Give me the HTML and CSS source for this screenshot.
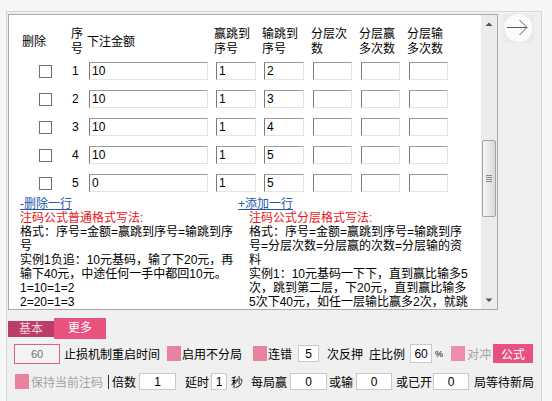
FILE: index.html
```html
<!DOCTYPE html>
<html lang="zh-CN">
<head>
<meta charset="utf-8">
<title>注码设置</title>
<link rel="stylesheet" href="styles.css">
</head>
<body>
<div class="panel">
  <div class="top">
    <div class="scrollbox">
      <div class="content">
        <div class="grid">
          <div class="h mid del">删除</div>
          <div class="h">序<br>号</div>
          <div class="h mid">下注金额</div>
          <div class="h">赢跳到<br>序号</div>
          <div class="h">输跳到<br>序号</div>
          <div class="h">分层次<br>数</div>
          <div class="h">分层赢<br>多次数</div>
          <div class="h">分层输<br>多次数</div>

          <div class="c cbcell"><input class="cb" type="checkbox"></div>
          <div class="c num">1</div>
          <div class="c"><input class="ti w1" type="text" value="10"></div>
          <div class="c"><input class="ti w2" type="text" value="1"></div>
          <div class="c"><input class="ti w2" type="text" value="2"></div>
          <div class="c"><input class="ti w3" type="text" value=""></div>
          <div class="c"><input class="ti w3" type="text" value=""></div>
          <div class="c"><input class="ti w3" type="text" value=""></div>

          <div class="c cbcell"><input class="cb" type="checkbox"></div>
          <div class="c num">2</div>
          <div class="c"><input class="ti w1" type="text" value="10"></div>
          <div class="c"><input class="ti w2" type="text" value="1"></div>
          <div class="c"><input class="ti w2" type="text" value="3"></div>
          <div class="c"><input class="ti w3" type="text" value=""></div>
          <div class="c"><input class="ti w3" type="text" value=""></div>
          <div class="c"><input class="ti w3" type="text" value=""></div>

          <div class="c cbcell"><input class="cb" type="checkbox"></div>
          <div class="c num">3</div>
          <div class="c"><input class="ti w1" type="text" value="10"></div>
          <div class="c"><input class="ti w2" type="text" value="1"></div>
          <div class="c"><input class="ti w2" type="text" value="4"></div>
          <div class="c"><input class="ti w3" type="text" value=""></div>
          <div class="c"><input class="ti w3" type="text" value=""></div>
          <div class="c"><input class="ti w3" type="text" value=""></div>

          <div class="c cbcell"><input class="cb" type="checkbox"></div>
          <div class="c num">4</div>
          <div class="c"><input class="ti w1" type="text" value="10"></div>
          <div class="c"><input class="ti w2" type="text" value="1"></div>
          <div class="c"><input class="ti w2" type="text" value="5"></div>
          <div class="c"><input class="ti w3" type="text" value=""></div>
          <div class="c"><input class="ti w3" type="text" value=""></div>
          <div class="c"><input class="ti w3" type="text" value=""></div>

          <div class="c cbcell"><input class="cb" type="checkbox"></div>
          <div class="c num">5</div>
          <div class="c"><input class="ti w1" type="text" value="0"></div>
          <div class="c"><input class="ti w2" type="text" value="1"></div>
          <div class="c"><input class="ti w2" type="text" value="5"></div>
          <div class="c"><input class="ti w3" type="text" value=""></div>
          <div class="c"><input class="ti w3" type="text" value=""></div>
          <div class="c"><input class="ti w3" type="text" value=""></div>
        </div>

        <div class="notes">
          <div class="col left">
            <span class="link">-删除一行</span>
            <div class="red">注码公式普通格式写法:</div>
            <div>格式：序号=金额=赢跳到序号=输跳到序<br>号</div>
            <div>实例1负追：10元基码，输了下20元，再<br>输下40元，中途任何一手中都回10元。</div>
            <div>1=10=1=2</div>
            <div>2=20=1=3</div>
          </div>
          <div class="col right">
            <span class="link">+添加一行</span>
            <div class="txt">
              <div class="red">注码公式分层格式写法:</div>
              <div>格式：序号=金额=赢跳到序号=输跳到序<br>号=分层次数=分层赢的次数=分层输的资<br>料</div>
              <div>实例1：10元基码一下下，直到赢比输多5<br>次，跳到第二层，下20元，直到赢比输多<br>5次下40元，如任一层输比赢多2次，就跳</div>
            </div>
          </div>
        </div>
      </div>
      <div class="vscroll">
        <div class="sb-btn"><svg width="16" height="17" viewBox="0 0 16 17"><path d="M4.5 11 L8 7.5 L11.5 11 Z" fill="#505050"/></svg></div>
        <div class="track">
          <div class="thumb"><span class="grip"></span></div>
        </div>
        <div class="sb-btn"><svg width="16" height="17" viewBox="0 0 16 17"><path d="M4.5 6.5 L8 10 L11.5 6.5 Z" fill="#505050"/></svg></div>
      </div>
    </div>
    <div class="next">
      <svg width="31" height="29" viewBox="0 0 31 29">
        <circle cx="15.5" cy="14" r="14" fill="#fbfbfb"/>
        <path d="M4 13.5 H24 M16.5 6 L24 13.5 L16.5 21" fill="none" stroke="#5a5a5a" stroke-width="1"/>
      </svg>
    </div>
  </div>

  <div class="tabs">
    <div class="tab t1">基本</div>
    <div class="tab t2">更多</div>
  </div>

  <div class="row r1">
    <input class="in60" type="text" value="60">
    <span class="m4">止损机制重启时间</span>
    <span class="pk m7"></span>
    <span class="m1">启用不分局</span>
    <span class="pk m11"></span>
    <span class="m1">连错</span>
    <input class="gi m6 wi21" type="text" value="5">
    <span class="m8">次反押</span>
    <span class="m6">庄比例</span>
    <input class="gi m5 wi22 tall" type="text" value="60">
    <span class="pct m3">%</span>
    <span class="pk light m9"></span>
    <span class="gray m2">对冲</span>
    <button class="btn m2" type="button">公式</button>
  </div>

  <div class="row r2">
    <span class="pk m8"></span>
    <span class="gray m2">保持当前注码</span>
    <span class="bar m5"></span>
    <span class="m3b">倍数</span>
    <input class="gi m3 wi37" type="text" value="1">
    <span class="m9">延时</span>
    <input class="gi m2 wi16" type="text" value="1">
    <span class="m4">秒</span>
    <span class="m8">每局赢</span>
    <input class="gi m3 wi37" type="text" value="0">
    <span class="m2">或输</span>
    <input class="gi m3 wi36" type="text" value="0">
    <span class="m4">或已开</span>
    <input class="gi m1 wi36" type="text" value="0">
    <span class="m5">局等待新局</span>
  </div>
</div>
</body>
</html>
```

FILE: styles.css
```css
* { box-sizing: border-box; }
html, body { margin: 0; padding: 0; }
body {
  width: 552px;
  height: 401px;
  overflow: hidden;
  background: #f6f6f6;
  padding-top: 11px;
  font-family: "Liberation Sans", "Noto Sans CJK SC", sans-serif;
  font-size: 12px;
  color: #000;
}
.panel {
  margin-left: 6px;
  width: 536px;
  height: 390px;
  background: #f0f0f0;
  border: 1px solid #d6d6d6;
  border-bottom: none;
  padding-top: 2px;
}
.top { display: flex; align-items: flex-start; }
.scrollbox {
  margin-left: 1px;
  width: 490px;
  height: 296px;
  border: 1px solid #a9a9a9;
  background: #fff;
  display: flex;
}
.content {
  flex: 1;
  overflow: hidden;
  padding: 12px 0 0 11px;
  line-height: 14px;
}
.grid {
  display: grid;
  grid-template-columns: 50px 17px 127px 48px 49px 48px 48px 48px;
  grid-template-rows: 30px repeat(5, 28px);
}
.h { line-height: 15px; align-self: start; }
.h.mid { align-self: center; }
.h.del { padding-left: 2px; }
.h:nth-child(2) { padding-left: 1px; }
.c { align-self: center; display: flex; align-items: center; }
.cbcell { padding-left: 19px; }
.num { padding-left: 2px; }
.cb {
  appearance: none;
  -webkit-appearance: none;
  margin: 0;
  width: 13px;
  height: 13px;
  border: 1px solid #707070;
  background: #fff;
}
.ti {
  appearance: none;
  margin: 0 0 0 2px;
  height: 18px;
  padding: 0 2px;
  font: inherit;
  font-size: 12px;
  color: #000;
  background: #fff;
  border-style: solid;
  border-width: 1px;
  border-color: #9c9c9c #e3e3e3 #e3e3e3 #7a7a7a;
  outline: none;
}
.w1 { width: 119px; }
.w2 { width: 40px; }
.w3 { width: 39px; }

.notes { display: flex; }
.col.left { width: 218px; }
.col { white-space: nowrap; }
.right .txt { padding-left: 11px; }
.link { color: #2458a8; text-decoration: underline; display: inline-block; }
.red { color: #e8141c; }

.vscroll {
  width: 16px;
  background: #ececec;
  display: flex;
  flex-direction: column;
}
.sb-btn { height: 17px; display: flex; }
.track { flex: 1; }
.thumb {
  margin: 108px 1px 0 1px;
  height: 77px;
  border: 1px solid #a3a3a3;
  border-radius: 2px;
  background: linear-gradient(to right, #f5f5f5, #d9d9d9);
  display: flex;
  align-items: center;
  justify-content: center;
}
.grip {
  width: 6px;
  height: 7px;
  background: repeating-linear-gradient(to bottom, #8a8a8a 0 1px, transparent 1px 2px);
}
.next {
  margin-left: 5px;
  width: 31px;
  height: 29px;
  background: #e9e9e9;
  display: flex;
}

.tabs {
  margin-top: 8px;
  height: 21px;
  display: flex;
  align-items: center;
  padding-left: 1px;
}
.tab { text-align: center; }
.t1 {
  width: 46px;
  height: 16px;
  line-height: 16px;
  background: #bb3d68;
  color: #f6d3df;
}
.t2 {
  width: 52px;
  height: 21px;
  line-height: 21px;
  background: #e8527f;
  color: #fff;
}

.row {
  display: flex;
  align-items: center;
  height: 21px;
  white-space: nowrap;
}
.r1 { margin-top: 4px; }
.r2 { margin-top: 7px; }

.in60 {
  appearance: none;
  margin: 0 0 0 7px;
  width: 46px;
  height: 20px;
  border: 1px solid #d9628c;
  background: #f3f3f3;
  color: #6e6e6e;
  font: inherit;
  font-size: 11px;
  text-align: center;
  padding: 0;
  outline: none;
}
.gi {
  appearance: none;
  height: 17px;
  border: 1px solid #c9c9c9;
  background: #fff;
  color: #000;
  font: inherit;
  font-size: 12px;
  text-align: center;
  padding: 0;
  outline: none;
}
.tall { height: 19px; }
.wi21 { width: 21px; }
.wi22 { width: 22px; }
.wi37 { width: 37px; }
.wi36 { width: 36px; }
.wi16 { width: 16px; }

.pk { width: 14px; height: 15px; background: #e8829f; display: inline-block; }
.pk.light { background: #ed8fab; }
.gray { color: #a3a3a3; }
.pct { font-size: 9px; width: 7px; }
.bar { width: 1px; height: 14px; background: #333; margin-right: 3px; }
.btn {
  width: 40px;
  height: 19px;
  border: none;
  padding: 0;
  background: #e8507f;
  color: #fff;
  font: inherit;
  font-size: 12px;
}

.m1 { margin-left: 1px; }
.m2 { margin-left: 2px; }
.m3 { margin-left: 3px; }
.m3b { margin-left: 0; }
.m4 { margin-left: 4px; }
.m5 { margin-left: 5px; }
.m6 { margin-left: 6px; }
.m7 { margin-left: 7px; }
.m8 { margin-left: 8px; }
.m9 { margin-left: 9px; }
.m11 { margin-left: 11px; }
```
